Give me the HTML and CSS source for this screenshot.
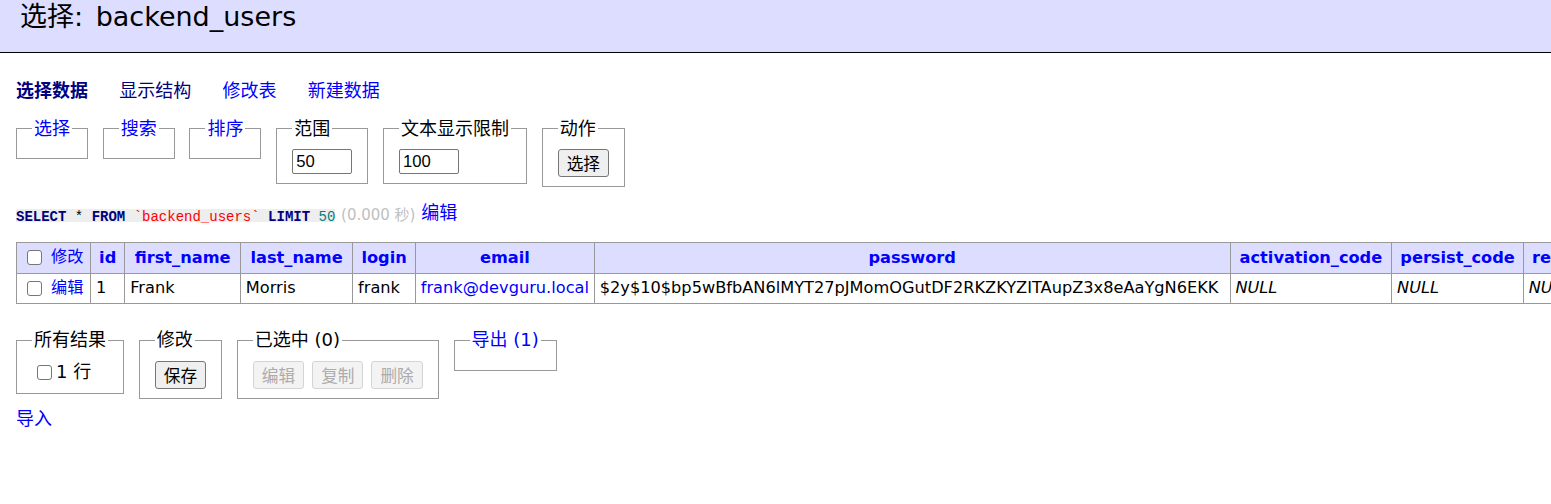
FILE: index.html
```html
<!DOCTYPE html>
<html lang="zh-CN">
<head>
<meta charset="utf-8">
<title>选择: backend_users - Adminer</title>
<link rel="stylesheet" href="styles.css">
</head>
<body>
<div id="content">
<h2>选择: backend_users</h2>
<p class="links">
<a href="#" class="active visited">选择数据</a>
<a href="#" class="visited">显示结构</a>
<a href="#">修改表</a>
<a href="#">新建数据</a>
</p>
<form class="select-form">
<fieldset><legend><a href="#">选择</a></legend></fieldset>
<fieldset><legend><a href="#">搜索</a></legend></fieldset>
<fieldset><legend><a href="#">排序</a></legend></fieldset>
<fieldset><legend>范围</legend><input type="text" class="size" value="50"></fieldset>
<fieldset><legend>文本显示限制</legend><input type="text" class="size" value="100"></fieldset>
<fieldset><legend>动作</legend><input type="submit" value="选择"></fieldset>
</form>
<p class="sql"><code class="jush-sql"><span class="kw">SELECT</span> * <span class="kw">FROM</span> <span class="bac">`backend_users`</span> <span class="kw">LIMIT</span> <span class="num">50</span></code> <span class="time">(0.000 秒)</span> <a href="#">编辑</a></p>
<form class="data-form">
<table class="data">
<thead>
<tr>
<td class="check w-check"><input type="checkbox" class="cb"> <a href="#">修改</a></td>
<th class="w-id"><a href="#">id</a></th>
<th class="w-first"><a href="#">first_name</a></th>
<th class="w-last"><a href="#">last_name</a></th>
<th class="w-login"><a href="#">login</a></th>
<th class="w-email"><a href="#">email</a></th>
<th class="w-password"><a href="#">password</a></th>
<th class="w-activation"><a href="#">activation_code</a></th>
<th class="w-persist"><a href="#">persist_code</a></th>
<th><a href="#">reset_password_code</a></th>
<th><a href="#">permissions</a></th>
<th><a href="#">is_activated</a></th>
<th><a href="#">role_id</a></th>
<th><a href="#">activated_at</a></th>
<th><a href="#">last_login</a></th>
<th><a href="#">created_at</a></th>
<th><a href="#">updated_at</a></th>
<th><a href="#">deleted_at</a></th>
<th><a href="#">is_superuser</a></th>
</tr>
</thead>
<tbody>
<tr>
<td class="check"><input type="checkbox" class="cb"> <a href="#">编辑</a></td>
<td>1</td>
<td>Frank</td>
<td>Morris</td>
<td>frank</td>
<td><a href="#">frank@devguru.local</a></td>
<td>$2y$10$bp5wBfbAN6lMYT27pJMomOGutDF2RKZKYZITAupZ3x8eAaYgN6EKK</td>
<td><i>NULL</i></td>
<td><i>NULL</i></td>
<td><i>NULL</i></td>
<td></td>
<td>1</td>
<td>2</td>
<td><i>NULL</i></td>
<td>2020-11-19 22:54:21</td>
<td>2020-11-19 22:45:54</td>
<td>2020-11-19 22:54:21</td>
<td><i>NULL</i></td>
<td>1</td>
</tr>
</tbody>
</table>
<div class="footer">
<fieldset><legend>所有结果</legend><label><input type="checkbox" class="cb">1 行</label></fieldset>
<fieldset><legend>修改</legend><input type="submit" value="保存"></fieldset>
<fieldset><legend>已选中 (0)</legend><input type="submit" value="编辑" disabled> <input type="submit" value="复制" disabled> <input type="submit" value="删除" disabled></fieldset>
<fieldset><legend><a href="#">导出 (1)</a></legend></fieldset>
</div>
</form>
<p class="import"><a href="#">导入</a></p>
</div>
</body>
</html>
```

FILE: styles.css
```css
html {
  overflow: hidden;
}

body {
  margin: 0;
  color: #000;
  background: #fff;
  font: 18px/22.5px "DejaVu Sans", "Noto Sans CJK SC", sans-serif;
}

a {
  color: #00f;
  text-decoration: none;
}

a.visited {
  color: #000080;
}

.active {
  font-weight: bold;
}

#content {
  padding: 0 0 20px 16px;
}

h2 {
  font-size: 27px;
  line-height: 34px;
  font-weight: normal;
  word-spacing: 4px;
  margin: 0 0 27px -16px;
  padding: 0 0 0 20px;
  height: 53px;
  box-sizing: border-box;
  border-bottom: 1px solid #000;
  background: #ddf;
}

p {
  margin: 0;
}

.links a {
  margin-right: 25.5px;
  white-space: nowrap;
}

fieldset {
  display: inline-block;
  vertical-align: top;
  margin: 15px 9px 0 0;
  padding: 9px 15px;
  border: 1px solid #999;
  min-width: 0;
}

legend {
  padding: 0 2px;
}

input.size {
  width: 60px;
  height: 25.4px;
  box-sizing: border-box;
  margin: 0;
  padding: 0 3px;
  border: 1px solid #767676;
  border-radius: 2px;
  font: 16.67px "Liberation Sans", Arial, sans-serif;
  color: #000;
  vertical-align: top;
}

input[type=submit] {
  height: 28.4px;
  box-sizing: border-box;
  margin: 0;
  padding: 0 8px;
  border: 1px solid #767676;
  border-radius: 3px;
  background: #efefef;
  color: #000;
  font: 16.67px/normal "DejaVu Sans", "Noto Sans CJK SC", sans-serif;
  vertical-align: top;
}

input[type=submit]:disabled {
  background: #f3f3f3;
  border-color: #d4d4d4;
  color: #acacac;
}

input[type=submit] + input[type=submit] {
  margin-left: 2.3px;
}

input.cb {
  -webkit-appearance: none;
  appearance: none;
  width: 15px;
  height: 15px;
  box-sizing: border-box;
  margin: 4px 4px 4px 5px;
  border: 1px solid #767676;
  border-radius: 3px;
  background: #fff;
  vertical-align: middle;
}

.sql {
  margin-top: 14.5px;
}

code {
  display: inline-block;
  height: 12.5px;
  font: 14px/normal "Liberation Mono", "DejaVu Sans Mono", monospace;
  background: #eee;
  vertical-align: -2.5px;
  white-space: pre;
}

.kw {
  color: #000080;
  font-weight: bold;
}

.bac {
  color: #f00;
}

.num {
  color: #008080;
}

.time {
  color: #c0c0c0;
  font-size: 15px;
  vertical-align: -1px;
}

table.data {
  width: max-content;
  margin-top: 15.7px;
  border-collapse: collapse;
  font-size: 16.2px;
  line-height: 20.25px;
  white-space: nowrap;
}

table.data td,
table.data th {
  border: 1px solid #999;
  padding: 3.24px 4.86px;
  vertical-align: middle;
  text-align: left;
}

table.data thead td,
table.data thead th {
  background: #ddf;
}

table.data thead th {
  text-align: center;
  padding: 3.24px 8.1px;
  font-weight: bold;
}

table.data .w-check { width: 63.3px; }
table.data .w-id { width: 16.5px; }
table.data .w-first { width: 98.4px; }
table.data .w-last { width: 95.1px; }
table.data .w-login { width: 45.5px; }
table.data .w-email { width: 160.2px; }
table.data .w-password { width: 618.5px; }
table.data .w-activation { width: 144.5px; }
table.data .w-persist { width: 114.5px; }

.footer {
  padding-top: 10.4px;
}

.import {
  margin-top: 9px;
}
```
